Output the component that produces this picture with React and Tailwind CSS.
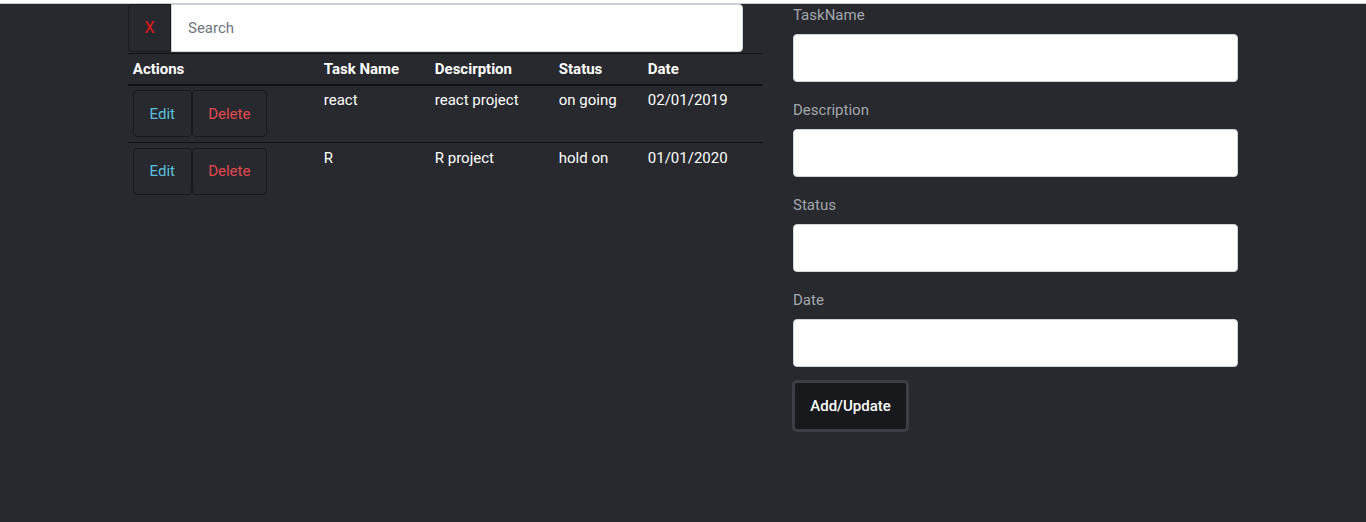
import { useState } from 'react'

const TASKS = [
  { id: 1, name: 'react', desc: 'react project', status: 'on going', date: '02/01/2019' },
  { id: 2, name: 'R', desc: 'R project', status: 'hold on', date: '01/01/2020' },
]

const FIELDS = ['TaskName', 'Description', 'Status', 'Date']

export default function App() {
  const [search, setSearch] = useState('')
  const [tasks] = useState(TASKS)

  const visible = tasks.filter(t => t.name.toLowerCase().includes(search.toLowerCase()))

  return (
    <div className="min-h-[522px] bg-[#27292e] text-white" style={{ fontFamily: 'Roboto, "Liberation Sans", sans-serif' }}>
      {/* top strip */}
      <div className="h-[4px] bg-white border-b border-[#c9cbcf]" />

      <div className="flex pl-[128px]">
        {/* Left: search + table */}
        <div className="w-[635px]">
          <div className="flex h-[48px] w-[615px]">
            <button
              onClick={() => setSearch('')}
              className="w-[43px] h-full border border-[#17191c] rounded-l-[4px] text-[#e8141b] text-[16px] flex items-center justify-center"
            >
              X
            </button>
            <input
              value={search}
              onChange={e => setSearch(e.target.value)}
              placeholder="Search"
              className="flex-1 h-full bg-white rounded-r-[4px] border border-[#ced4da] px-4 text-[15px] text-[#495057] placeholder-[#6c757d] outline-none"
            />
          </div>

          <table className="w-[635px] mt-px border-collapse table-fixed text-[15px]">
            <colgroup>
              <col className="w-[191px]" />
              <col className="w-[111px]" />
              <col className="w-[124px]" />
              <col className="w-[89px]" />
              <col className="w-[120px]" />
            </colgroup>
            <thead>
              <tr className="border-t border-[#111315] border-b-2 border-b-[#111315]">
                {['Actions', 'Task Name', 'Descirption', 'Status', 'Date'].map(h => (
                  <th key={h} className="text-left font-bold px-[4.8px] h-[31px]">{h}</th>
                ))}
              </tr>
            </thead>
            <tbody>
              {visible.map((t, i) => (
                <tr key={t.id} className={i > 0 ? 'border-t border-[#111315]' : ''}>
                  <td className="p-[4.8px] align-top">
                    <div className="flex">
                      <button className="h-[47px] w-[59px] border border-[#16181b] rounded-[4px] text-[#5bc0de]">Edit</button>
                      <button className="h-[47px] w-[75px] border border-[#16181b] rounded-[4px] text-[#e4484f]">Delete</button>
                    </div>
                  </td>
                  <td className="px-[4.8px] pt-[3.5px] align-top leading-[22px]">{t.name}</td>
                  <td className="px-[4.8px] pt-[3.5px] align-top leading-[22px]">{t.desc}</td>
                  <td className="px-[4.8px] pt-[3.5px] align-top leading-[22px]">{t.status}</td>
                  <td className="px-[4.8px] pt-[3.5px] align-top leading-[22px]">{t.date}</td>
                </tr>
              ))}
            </tbody>
          </table>
        </div>

        {/* Right: form */}
        <div className="w-[445px] ml-[30px]">
          {FIELDS.map(f => (
            <div key={f} className="mb-[17px]">
              <label className="block h-[22px] leading-[22px] mb-2 text-[15px] text-[#a3a7ad]">{f}</label>
              <input className="w-full h-[48px] bg-white border border-[#ced4da] rounded-[4px] px-3 outline-none text-[#495057]" />
            </div>
          ))}
          <button className="-mt-[4px] h-[52px] w-[117px] -ml-px bg-[#17191c] border-[3px] border-[#3b3e44] rounded-[5px] text-white text-[15px] font-medium">
            Add/Update
          </button>
        </div>
      </div>
    </div>
  )
}
